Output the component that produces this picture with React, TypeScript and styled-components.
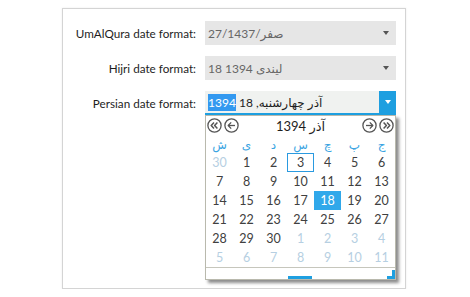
import React from 'react';
import styled, { createGlobalStyle } from 'styled-components';

const GlobalStyle = createGlobalStyle`
  body {
    margin: 0;
    background: #ffffff;
    font-family: Lato, "DejaVu Sans", sans-serif;
  }
`;

const Page = styled.div`
  padding: 8px 0 0 62px;
`;

const Panel = styled.div`
  width: 344px;
  height: 281px;
  box-sizing: border-box;
  border: 1px solid #d4d4d4;
  box-shadow: 0 0 2px rgba(0, 0, 0, 0.08);
  padding-top: 12px;
  display: flex;
  flex-direction: column;
  gap: 11px;
`;

const Row = styled.div`
  display: grid;
  grid-template-columns: 133px 191px;
  column-gap: 9px;
  align-items: center;
`;

const Label = styled.label`
  text-align: right;
  font-size: 11.7px;
  color: #1e1e1e;
  white-space: nowrap;
`;

const Combo = styled.div<{ $open?: boolean }>`
  position: relative;
  height: 24px;
  box-sizing: border-box;
  display: flex;
  align-items: center;
  background: ${(p) => (p.$open ? '#f0f2f0' : '#e6e6e6')};
  border-bottom: ${(p) => (p.$open ? '2px solid #1e9fe0' : 'none')};
  font-size: 12px;
  color: ${(p) => (p.$open ? '#1e1e1e' : '#666666')};
  padding-left: 3px;
`;

const ComboText = styled.div`
  flex: 1;
  white-space: nowrap;
  direction: ltr;
`;

const Arrow = styled.div<{ $open?: boolean }>`
  width: 17px;
  align-self: stretch;
  display: flex;
  align-items: center;
  justify-content: center;
  background: ${(p) => (p.$open ? '#1e9fe0' : 'transparent')};
  margin-right: ${(p) => (p.$open ? '0' : '2px')};

  &::after {
    content: '';
    border-left: 3px solid transparent;
    border-right: 3px solid transparent;
    border-top: 4px solid ${(p) => (p.$open ? '#ffffff' : '#555555')};
  }
`;

const Selected = styled.span`
  background: #3399f0;
  color: #ffffff;
  padding: 1px 0;
`;

const Popup = styled.div`
  position: absolute;
  top: calc(100% + 2px);
  left: 0;
  width: 191px;
  box-sizing: border-box;
  background: #ffffff;
  border: 1px solid #b9b9ad;
  box-shadow: 3px 3px 3px rgba(0, 0, 0, 0.45);
  z-index: 2;
`;

const Header = styled.div`
  height: 19px;
  display: flex;
  align-items: center;
  justify-content: space-between;
  padding: 0 1px;
`;

const NavGroup = styled.div`
  display: flex;
  gap: 2px;
`;

const Title = styled.div`
  font-size: 13px;
  color: #1e1e1e;
  direction: ltr;
  white-space: nowrap;
`;

const Grid = styled.div`
  display: grid;
  grid-template-columns: repeat(7, 27px);
`;

const DayName = styled.div`
  height: 18px;
  display: flex;
  align-items: center;
  justify-content: center;
  font-size: 12px;
  color: #3aa4e2;
`;

const Day = styled.div<{ $other?: boolean; $today?: boolean; $selected?: boolean }>`
  height: 19px;
  box-sizing: border-box;
  display: flex;
  align-items: center;
  justify-content: center;
  font-size: 12.5px;
  color: ${(p) => (p.$selected ? '#ffffff' : p.$other ? '#b6cfe2' : '#404040')};
  background: ${(p) => (p.$selected ? '#30a8ea' : 'transparent')};
  border: ${(p) => (p.$today ? '1px solid #2a9ae0' : 'none')};
`;

const Footer = styled.div`
  position: relative;
  height: 11px;
  border-top: 1px solid #c6c6bc;
`;

const FooterBar = styled.div`
  position: absolute;
  bottom: 0;
  left: 82px;
  width: 24px;
  height: 3px;
  background: #1e9fe0;
`;

const Grip = styled.div`
  position: absolute;
  right: 0;
  bottom: 0;
  width: 8px;
  height: 9px;
  border-right: 3px solid #1e9fe0;
  border-bottom: 3px solid #1e9fe0;
  box-sizing: border-box;
`;

const NavIcon: React.FC<{ dir: 'left' | 'right'; double?: boolean }> = ({ dir, double }) => (
  <svg width="15" height="15" viewBox="0 0 15 15">
    <g transform={dir === 'right' ? 'translate(15 0) scale(-1 1)' : undefined}>
      <circle cx="7.5" cy="7.5" r="6.6" fill="none" stroke="#555" strokeWidth="1.3" />
      {double ? (
        <g fill="none" stroke="#555" strokeWidth="1.5" strokeLinejoin="round">
          <polyline points="7,4.6 4.2,7.5 7,10.4" />
          <polyline points="10.4,4.6 7.6,7.5 10.4,10.4" />
        </g>
      ) : (
        <g fill="none" stroke="#555" strokeWidth="1.3" strokeLinejoin="round">
          <polyline points="7.2,4.4 4.2,7.5 7.2,10.6" />
          <line x1="4.4" y1="7.5" x2="11" y2="7.5" />
        </g>
      )}
    </g>
  </svg>
);

const dayNames = ['ش', 'ی', 'د', 'س', 'چ', 'پ', 'ج'];

type Cell = { n: number; other?: boolean };

const days: Cell[] = [
  { n: 30, other: true },
  ...Array.from({ length: 30 }, (_, i) => ({ n: i + 1 })),
  ...Array.from({ length: 11 }, (_, i) => ({ n: i + 1, other: true })),
];

const App: React.FC = () => {
  return (
    <Page>
      <GlobalStyle />
      <Panel>
        <Row>
          <Label>UmAlQura date format:</Label>
          <Combo>
            <ComboText>27/1437/صفر</ComboText>
            <Arrow />
          </Combo>
        </Row>
        <Row>
          <Label>Hijri date format:</Label>
          <Combo>
            <ComboText>18 1394 ليندى</ComboText>
            <Arrow />
          </Combo>
        </Row>
        <Row>
          <Label>Persian date format:</Label>
          <Combo $open>
            <ComboText>
              <Selected>1394</Selected> 18 ,<span dir="rtl">آذر چهارشنبه</span>
            </ComboText>
            <Arrow $open />
            <Popup>
              <Header>
                <NavGroup>
                  <NavIcon dir="left" double />
                  <NavIcon dir="left" />
                </NavGroup>
                <Title>1394 <span dir="rtl">آذر</span></Title>
                <NavGroup>
                  <NavIcon dir="right" />
                  <NavIcon dir="right" double />
                </NavGroup>
              </Header>
              <Grid>
                {dayNames.map((d) => (
                  <DayName key={d}>{d}</DayName>
                ))}
                {days.map((d, i) => (
                  <Day
                    key={i}
                    $other={d.other}
                    $today={!d.other && d.n === 3}
                    $selected={!d.other && d.n === 18}
                  >
                    {d.n}
                  </Day>
                ))}
              </Grid>
              <Footer>
                <FooterBar />
                <Grip />
              </Footer>
            </Popup>
          </Combo>
        </Row>
      </Panel>
    </Page>
  );
};

export default App;
